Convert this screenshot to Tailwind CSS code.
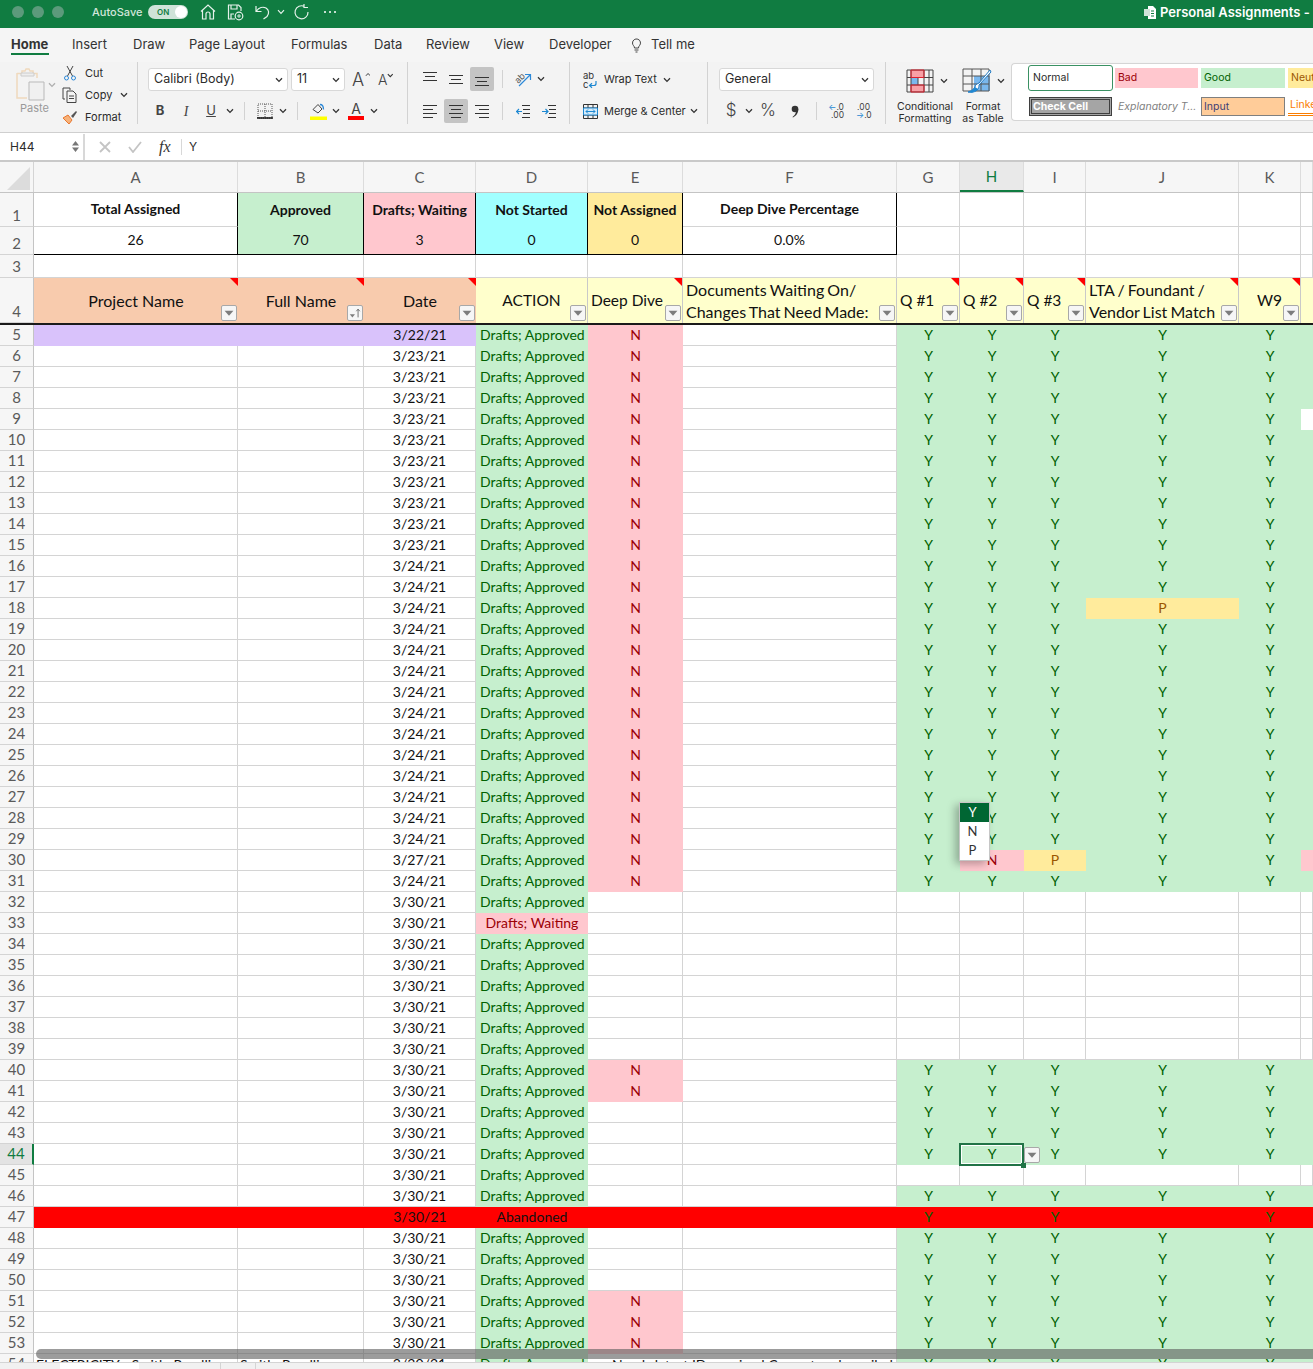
<!DOCTYPE html>
<html lang="en">
<head>
  <meta charset="UTF-8" />
  <title>Personal Assignments</title>
  <script src="https://cdn.jsdelivr.net/npm/@tailwindcss/browser@4"></script>
</head>
<body class="h-[1369px] w-[1313px] overflow-hidden bg-white font-['Inter',sans-serif] text-[#2b2b2b]">

  <svg class="hidden">
    <symbol id="chev" viewBox="0 0 8 6"><path d="M1 1.2 4 4.4 7 1.2" fill="none" stroke="#333" stroke-width="1.3"/></symbol>
    <symbol id="filter" viewBox="0 0 16 16"><path d="M3 5.5h10L8 11z" fill="#7d7d7d"/></symbol>
  </svg>

  <!-- title bar -->
  <div class="flex h-[28px] items-center bg-[#107c41] pb-[4px] text-white">
    <div class="ml-[12px] flex gap-[8px]">
      <span class="h-[12px] w-[12px] rounded-full bg-[#5c9a7b]"></span>
      <span class="h-[12px] w-[12px] rounded-full bg-[#5c9a7b]"></span>
      <span class="h-[12px] w-[12px] rounded-full bg-[#5c9a7b]"></span>
    </div>
    <span class="ml-[28px] w-[56px] text-[11px] font-medium text-[#d3e6db]">AutoSave</span>
    <div class="flex h-[14px] w-[40px] items-center justify-between rounded-full bg-[#cfe3d8] pl-[9px] pr-[1px]">
      <span class="text-[8px] font-semibold text-[#107c41]">ON</span>
      <span class="h-[12px] w-[12px] rounded-full bg-white"></span>
    </div>
    <svg class="ml-[11px]" width="18" height="18" viewBox="0 0 18 18" fill="none" stroke="#e6f2eb" stroke-width="1.2"><path d="M2 8.5 9 2l7 6.5M3.5 7.5V16h3.5v-5a2 2 0 0 1 4 0v5h3.500V7.500"/></svg>
    <svg class="ml-[9px]" width="18" height="18" viewBox="0 0 18 18" fill="none" stroke="#e6f2eb" stroke-width="1.2"><path d="M9 16H2.500V2h10l2.500 2.500V8M5 2v4h6V2M5 16v-5h3"/><circle cx="13" cy="13" r="3.800"/><path d="M11 13h4M13 11v4" stroke-width="0.9"/></svg>
    <svg class="ml-[10px]" width="17" height="18" viewBox="0 0 17 18" fill="none" stroke="#e6f2eb" stroke-width="1.2"><path d="M2 3v5.500h5.500M2.500 8C5 4.500 9 3.500 12 5c3 1.800 3.500 5.500 1 8.500L9.500 16"/></svg>
    <svg class="ml-[6px]" width="8" height="6" viewBox="0 0 8 6" fill="none" stroke="#e6f2eb" stroke-width="1.2"><path d="M1 1.200 4 4.400 7 1.200"/></svg>
    <svg class="ml-[8px]" width="17" height="18" viewBox="0 0 17 18" fill="none" stroke="#e6f2eb" stroke-width="1.2"><path d="M11.500 3.500A6.500 6.500 0 1 0 15 9M11 1v3.500h4"/></svg>
    <span class="ml-[14px] flex gap-[3px]"><i class="h-[2px] w-[2px] rounded-full bg-white"></i><i class="h-[2px] w-[2px] rounded-full bg-white"></i><i class="h-[2px] w-[2px] rounded-full bg-white"></i></span>
    <div class="ml-auto flex items-center gap-[3px] whitespace-nowrap pt-[1px]">
      <svg width="14" height="15" viewBox="0 0 14 15"><path d="M5 1h5l3 3v10H5z" fill="#fff"/><path d="M1 4h6v7H1z" fill="#cfe3d8"/><path d="M8 6h3M8 8.500h3M8 11h3" stroke="#107c41" stroke-width="1"/></svg>
      <span class="w-[153px] overflow-hidden text-[13px] font-semibold">Personal Assignments -</span>
    </div>
  </div>

  <!-- tabs -->
  <div class="flex h-[34px] items-center bg-[#f5f5f5] pl-[11px] text-[13px] text-[#333]">
    <span class="relative w-[61px] font-bold">Home<i class="absolute left-0 top-[18px] h-[2px] w-[38px] bg-[#107c41]"></i></span>
    <span class="w-[61px]">Insert</span>
    <span class="w-[56px]">Draw</span>
    <span class="w-[102px]">Page Layout</span>
    <span class="w-[83px]">Formulas</span>
    <span class="w-[52px]">Data</span>
    <span class="w-[68px]">Review</span>
    <span class="w-[55px]">View</span>
    <span class="w-[82px]">Developer</span>
    <svg class="-ml-[3px] mr-[3px] w-[20px]" width="12" height="16" viewBox="0 0 20 16" fill="none" stroke="#444" stroke-width="1"><path d="M4.500 6a4 4 0 1 1 7 2.600c-.8 1-1 1.400-1 2.400h-4c0-1-.3-1.500-1-2.400A4 4 0 0 1 4.500 6zM6.500 13h4M7.500 15h2"/></svg>
    <span>Tell me</span>
  </div>

  <!-- ribbon -->
  <div class="flex h-[71px] items-start border-b border-[#cfcfcf] bg-[#f3f3f3] text-[11px] text-[#2b2b2b]">

    <!-- clipboard -->
    <div class="flex w-[137px] shrink-0">
      <div class="ml-[15px] mt-[6px] flex w-[47px] shrink-0 flex-col">
        <div class="flex items-center">
          <svg width="32" height="33" viewBox="0 0 32 33" fill="none"><path d="M2 5.500h5V3h3l1-2h3l1 2h3v2.500h4V10" stroke="#f0d9bd" stroke-width="1.500"/><path d="M2 5v25h10" stroke="#f0d9bd" stroke-width="1.500"/><path d="M6 5h13v3H6z" fill="#eee" stroke="#ccc"/><path d="M14 14h15v18H14z" fill="#f0f0f0" stroke="#b9b9b9"/></svg>
          <svg class="ml-[1px]" width="8" height="6"><use href="#chev" opacity="0.35"/></svg>
        </div>
        <span class="ml-[5px] mt-[1px] text-[11px] leading-[12px] text-[#9a9a9a]">Paste</span>
      </div>
      <div class="flex flex-col">
        <div class="flex h-[22px] items-center gap-[7px]">
          <svg width="16" height="16" viewBox="0 0 16 16" fill="none" stroke="#444" stroke-width="1"><path d="M5 1l5.500 10M11 1 5.500 11"/><circle cx="4.500" cy="13" r="2" stroke="#2b88d8"/><circle cx="11.500" cy="13" r="2" stroke="#2b88d8"/></svg>
          <span>Cut</span>
        </div>
        <div class="flex h-[22px] items-center gap-[7px]">
          <svg width="16" height="16" viewBox="0 0 16 16" fill="none" stroke="#444" stroke-width="1"><path d="M3 12H1V1h7v2"/><path d="M5 4h6l3 3v8.500H5zM7 9h5M7 11.500h5"/></svg>
          <span>Copy</span>
          <svg class="ml-[1px]" width="8" height="6"><use href="#chev"/></svg>
        </div>
        <div class="flex h-[22px] items-center gap-[7px]">
          <svg width="16" height="16" viewBox="0 0 16 16" fill="none"><path d="M1 9l5-3 4 5-3 4z" fill="#f7b27a" stroke="#e8772e"/><path d="M9 7l5-5 1 1-4 6z" fill="#555"/></svg>
          <span>Format</span>
        </div>
      </div>
    </div>
    <span class="h-[62px] w-px bg-[#d2d2d2]"></span>

    <!-- font -->
    <div class="w-[269px] shrink-0 pl-[10px] pt-[6px]">
      <div class="flex h-[23px] items-center">
        <div class="flex h-[23px] w-[140px] items-center justify-between rounded-[3px] border border-[#d8d8d8] bg-white pl-[5px] pr-[4px] text-[12.500px]">Calibri (Body)<svg width="8" height="6"><use href="#chev"/></svg></div>
        <div class="ml-[3px] flex h-[23px] w-[54px] items-center justify-between rounded-[3px] border border-[#d8d8d8] bg-white pl-[5px] pr-[4px] text-[12.500px]">11<svg width="8" height="6"><use href="#chev"/></svg></div>
        <span class="ml-[7px] flex w-[18px] items-start text-[18px] font-light leading-none text-[#444]">A<svg class="mt-[1px]" width="7" height="5"><use href="#chev" transform="rotate(180 3.500 2.500)"/></svg></span>
        <span class="ml-[8px] flex w-[16px] items-start text-[14px] font-light leading-none text-[#444]">A<svg width="7" height="5"><use href="#chev"/></svg></span>
      </div>
      <div class="mt-[9px] flex h-[22px] items-center text-[#444]">
        <span class="w-[24px] text-center text-[13px] font-bold">B</span>
        <span class="w-[28px] text-center font-['Liberation_Serif',serif] text-[14px] italic">I</span>
        <span class="w-[22px] text-center text-[13px] underline">U</span>
        <span class="flex w-[16px] justify-center"><svg width="8" height="6"><use href="#chev"/></svg></span>
        <span class="ml-[6px] h-[18px] w-px bg-[#d2d2d2]"></span>
        <span class="ml-[5px] flex w-[29px] justify-center">
          <svg width="16" height="16" viewBox="0 0 16 16" fill="none"><path d="M1 1h14v14H1zM8 1v14M1 8h14" stroke="#555" stroke-dasharray="1 1"/><path d="M0 15h16" stroke="#111" stroke-width="1.500"/></svg>
        </span>
        <span class="flex w-[8px] justify-center"><svg width="8" height="6"><use href="#chev"/></svg></span>
        <span class="ml-[10px] h-[18px] w-px bg-[#d2d2d2]"></span>
        <span class="ml-[8px] flex w-[24px] justify-center">
          <svg width="17" height="18" viewBox="0 0 17 18" fill="none"><path d="M3 7.500 8 2.500l4 4.500-4 4z" stroke="#444"/><path d="M10 2.500c2 0 3.500 2 3.500 5" stroke="#2b88d8" stroke-width="1.300"/><path d="M0 14.500h17V18H0z" fill="#ffff00"/></svg>
        </span>
        <span class="flex w-[12px] justify-center"><svg width="8" height="6"><use href="#chev"/></svg></span>
        <span class="flex w-[28px] flex-col items-center"><span class="text-[14px] leading-[14px]">A</span><i class="h-[4px] w-[16px] bg-[#ff0000]"></i></span>
        <span class="flex w-[8px] justify-center"><svg width="8" height="6"><use href="#chev"/></svg></span>
      </div>
    </div>
    <span class="h-[62px] w-px bg-[#d2d2d2]"></span>

    <!-- alignment -->
    <div class="w-[161px] shrink-0 pl-[10px] pt-[5px]">
      <div class="flex h-[24px] items-center">
        <span class="flex h-[24px] w-[24px] justify-center pt-[5px]"><svg width="14" height="9" stroke="#333"><path d="M0 .5h14M2 4.500h10M0 8.500h14"/></svg></span>
        <span class="ml-[2px] flex h-[24px] w-[24px] items-center justify-center"><svg width="14" height="9" stroke="#333"><path d="M0 .5h14M2 4.500h10M0 8.500h14"/></svg></span>
        <span class="ml-[2px] flex h-[24px] w-[24px] items-end justify-center rounded-[2px] bg-[#c4c4c4] pb-[5px]"><svg width="14" height="9" stroke="#333"><path d="M0 .5h14M2 4.500h10M0 8.500h14"/></svg></span>
        <span class="ml-[8px] h-[18px] w-px bg-[#d2d2d2]"></span>
        <span class="ml-[7px] flex w-[26px] justify-center">
          <svg width="18" height="16" viewBox="0 0 18 16" fill="none"><text x="1" y="11" transform="rotate(-45 5 8)" font-size="9" fill="#555">ab</text><path d="M5 15 16 4M11 3.500h5.500V9" stroke="#2b88d8" stroke-width="1.200"/></svg>
        </span>
        <span class="flex w-[10px] justify-center"><svg width="8" height="6"><use href="#chev"/></svg></span>
      </div>
      <div class="mt-[8px] flex h-[24px] items-center">
        <span class="flex h-[24px] w-[24px] items-center justify-center"><svg width="14" height="14" stroke="#333"><path d="M0 1.500h14M0 5.500h10M0 9.500h14M0 13.500h10"/></svg></span>
        <span class="ml-[2px] flex h-[24px] w-[24px] items-center justify-center rounded-[2px] bg-[#c4c4c4]"><svg width="14" height="14" stroke="#333"><path d="M0 1.500h14M2 5.500h10M0 9.500h14M2 13.500h10"/></svg></span>
        <span class="ml-[2px] flex h-[24px] w-[24px] items-center justify-center"><svg width="14" height="14" stroke="#333"><path d="M0 1.500h14M4 5.500h10M0 9.500h14M4 13.500h10"/></svg></span>
        <span class="ml-[8px] h-[18px] w-px bg-[#d2d2d2]"></span>
        <span class="ml-[8px] flex w-[24px] justify-center"><svg width="14" height="14" fill="none"><path d="M6 1.500h8M7 5.500h7M7 9.500h7M6 13.500h8" stroke="#333"/><path d="M0 7.500h6M3 5 .5 7.500 3 10" stroke="#1e88d2" stroke-width="1.200"/></svg></span>
        <span class="ml-[2px] flex w-[24px] justify-center"><svg width="14" height="14" fill="none"><path d="M6 1.500h8M7 5.500h7M7 9.500h7M6 13.500h8" stroke="#333"/><path d="M0 7.500h6M3.500 5 6 7.500 3.500 10" stroke="#1e88d2" stroke-width="1.200"/></svg></span>
      </div>
    </div>
    <span class="h-[62px] w-px bg-[#d2d2d2]"></span>

    <!-- wrap and merge -->
    <div class="w-[137px] shrink-0 pl-[13px] pt-[6px] text-[11px]">
      <div class="flex h-[23px] items-center">
        <svg class="mr-[6px]" width="15" height="18" viewBox="0 0 15 18" fill="none"><text x="0" y="8" font-size="9.500" fill="#333">ab</text><text x="0" y="17" font-size="9.500" fill="#333">c</text><path d="M13 10v2.500a2 2 0 0 1-2 2H6.500M9 12.300l-2.500 2.200L9 16.800" stroke="#1e88d2" stroke-width="1.200"/></svg>
        <span>Wrap Text</span>
        <svg class="ml-[6px]" width="8" height="6"><use href="#chev"/></svg>
      </div>
      <div class="mt-[9px] flex h-[22px] items-center">
        <svg class="mr-[6px]" width="15" height="15" viewBox="0 0 15 15" fill="none"><path d="M.5.5h14v14H.5zM.5 4h14M.5 11h14M5 .5V4M10 .5V4M5 11v3.500M10 11v3.500" stroke="#333"/><path d="M.5 4h14v7H.5z" fill="#d6ecfa" stroke="#1e88d2"/><path d="M3 7.500h9M5 5.500l-2 2 2 2M10 5.500l2 2-2 2" stroke="#1e88d2"/></svg>
        <span class="whitespace-nowrap">Merge &amp; Center</span>
        <svg class="ml-[4px]" width="8" height="6"><use href="#chev"/></svg>
      </div>
    </div>
    <span class="h-[62px] w-px bg-[#d2d2d2]"></span>

    <!-- number -->
    <div class="w-[177px] shrink-0 pl-[11px] pt-[6px]">
      <div class="flex h-[23px] w-[155px] items-center justify-between rounded-[3px] border border-[#d8d8d8] bg-white pl-[5px] pr-[4px] text-[12.500px]">General<svg width="8" height="6"><use href="#chev"/></svg></div>
      <div class="mt-[9px] flex h-[22px] items-center text-[#444]">
        <span class="w-[24px] text-center text-[17px] font-light">$</span>
        <span class="flex w-[12px] justify-center"><svg width="8" height="6"><use href="#chev"/></svg></span>
        <span class="w-[26px] text-center text-[17px] font-light">%</span>
        <span class="ml-[2px] flex w-[24px] justify-center"><svg width="8" height="13" viewBox="0 0 8 13" fill="#333"><circle cx="4" cy="4" r="3.300"/><path d="M5 6c2-1 2.500-3 2.300-2C7.500 8 5 11 2 12.500L1.500 12C3.500 10.500 5 8.500 5 6z"/></svg></span>
        <span class="ml-[9px] h-[18px] w-px bg-[#d2d2d2]"></span>
        <span class="ml-[11px] w-[16px] text-right text-[8.500px] leading-[8px]"><span class="text-[#1e88d2]">←</span>.0<br />.00</span>
        <span class="ml-[12px] w-[14px] text-right text-[8.500px] leading-[8px]">.00<br /><span class="text-[#1e88d2]">→</span>.0</span>
      </div>
    </div>
    <span class="h-[62px] w-px bg-[#d2d2d2]"></span>

    <!-- styles buttons -->
    <div class="ml-[9px] flex w-[60px] shrink-0 flex-col items-center pt-[6px]">
      <div class="ml-[4px] flex h-[26px] items-center gap-[6px]">
        <svg width="28" height="24" viewBox="0 0 28 24" fill="none"><path d="M5 1h13v7H5zM5 16h13v7H5z" fill="#f8a0a6"/><path d="M5 8.500h7v7.500H5z" fill="#7ab8ee"/><path d="M1 1h26v22H1zM1 8.500h26M1 16h26M5 1v22M12 8v8M18 1v22M23 1v22" stroke="#444"/><path d="M5 1h13v7.500H5zM5 16h13v7H5z" stroke="#e01f2d"/></svg>
        <svg width="8" height="6"><use href="#chev"/></svg>
      </div>
      <span class="mt-[7px] text-center text-[10.500px] leading-[12px]">Conditional Formatting</span>
    </div>
    <div class="flex w-[56px] shrink-0 flex-col items-center pt-[6px]">
      <div class="ml-[1px] flex h-[26px] items-center gap-[5px]">
        <svg width="30" height="26" viewBox="0 0 30 26" fill="none"><path d="M12 8h16v15H12z" fill="#7ab8ee"/><path d="M1 1h26v22H1zM1 8h26M1 16h26M10 1v22M19 1v22" stroke="#555"/><path d="M28 2 17 15c-2 1-4 2-4 4-1 2-4 4-7 5 3 1 8 0 10-3 1-2 1-3 1-4L29 4z" fill="#fff" stroke="#1e78c2"/><path d="M13 19c-1 2-4 4-7 5 3 1 8 0 10-3z" fill="#1e88d2"/></svg>
        <svg width="8" height="6"><use href="#chev"/></svg>
      </div>
      <span class="mt-[7px] text-center text-[10.500px] leading-[12px]">Format<br />as Table</span>
    </div>

    <!-- cell styles gallery -->
    <div class="mt-px h-[58px] min-w-0 flex-1 overflow-hidden rounded-l-[4px] border border-r-0 border-[#d5d5d5] bg-white pl-[16px] pt-[1px] text-[10.500px]">
      <div class="flex h-[26px] w-[400px] items-center">
        <span class="flex h-[26px] w-[85px] shrink-0 items-center rounded-[3px] border border-[#3a9163] pl-[4px]">Normal</span>
        <span class="ml-[2px] flex h-[20px] w-[83px] shrink-0 items-center bg-[#ffc7ce] pl-[3px] text-[#9c0006]">Bad</span>
        <span class="ml-[3px] flex h-[20px] w-[84px] shrink-0 items-center bg-[#c6efce] pl-[3px] text-[#006100]">Good</span>
        <span class="ml-[3px] flex h-[20px] w-[84px] shrink-0 items-center bg-[#ffeb9c] pl-[3px] text-[#9c5700]">Neutral</span>
      </div>
      <div class="mt-[6px] flex h-[19px] w-[400px] items-center">
        <span class="ml-px flex h-[19px] w-[83px] shrink-0 items-center border-[3px] border-double border-[#3f3f3f] bg-[#a5a5a5] pl-[1px] font-bold text-white">Check Cell</span>
        <span class="ml-[6px] w-[80px] shrink-0 whitespace-nowrap italic text-[#7f7f7f]">Explanatory T...</span>
        <span class="ml-[3px] flex h-[19px] w-[84px] shrink-0 items-center border border-[#7f7f7f] bg-[#ffcc99] pl-[2px] text-[#3f3f76]">Input</span>
        <span class="ml-[3px] flex h-[19px] w-[84px] shrink-0 items-center border-b-[3px] border-double border-[#fa7d00] pl-[2px] text-[#fa7d00]">Linked Cell</span>
      </div>
    </div>
  </div>

  <!-- formula bar -->
  <div class="flex h-[29px] items-center border-b-2 border-[#c9c9c9] bg-white text-[12px]">
    <div class="flex h-[26px] w-[85px] items-center justify-between border-r-2 border-[#d8d8d8] pl-[10px] pr-[3px]">
      H44
      <svg width="9" height="13" fill="#777"><path d="M4.500 1 8 5.500H1zM4.500 12 1 7.500h7z"/></svg>
    </div>
    <svg class="ml-[14px]" width="12" height="12" fill="none" stroke="#c4c4c4" stroke-width="1.800"><path d="M1 1l10 10M11 1 1 11"/></svg>
    <svg class="ml-[17px]" width="14" height="12" fill="none" stroke="#c4c4c4" stroke-width="1.800"><path d="M1 6l4 5 8-10"/></svg>
    <span class="ml-[17px] w-[22px] font-['Liberation_Serif',serif] text-[16px] italic text-[#333]">fx</span>
    <span class="h-[16px] w-px bg-[#d8d8d8]"></span>
    <span class="ml-[7px] text-[12px]">Y</span>
  </div>

  <!-- sheet -->
  <div id="sheet" class="relative h-[1200px] overflow-hidden font-['Lato',sans-serif] text-[14px] text-[#111]">
    <div id="rows"></div>

    <!-- dropdown list of the selected cell -->
    <div class="absolute left-[959px] top-[640px] z-20 flex w-[31px] flex-col border border-[#c6c6c6] bg-white pr-[4px] text-[13px] text-[#333] shadow-[-4px_3px_8px_rgba(0,0,0,0.28)]">
      <span class="-mr-[4px] flex h-[19px] items-center justify-center bg-[#006633] pr-[4px] text-white">Y</span>
      <span class="flex h-[19px] items-center justify-center">N</span>
      <span class="flex h-[19px] items-center justify-center">P</span>
    </div>

    <!-- selected cell H44 -->
    <div class="absolute left-[959px] top-[981px] z-10 h-[23px] w-[65px] border-2 border-[#217346] outline outline-1 -outline-offset-3 outline-white"></div>
    <div class="absolute left-[1021px] top-[1001px] z-10 h-[5px] w-[5px] bg-[#217346]"></div>
    <div class="absolute left-[1024px] top-[985px] z-10 h-[16px] w-[16px] rounded-[2px] border border-[#a8a8a8] bg-[#f6f6f6]"><svg class="h-full w-full"><use href="#filter"/></svg></div>

    <!-- horizontal scroller -->
    <div class="absolute bottom-[3px] left-[36px] right-0 z-20 h-[10px] rounded-l-full bg-[#5a5a5a]/60"></div>
  </div>

  <!-- sheet tabs -->
  <div class="flex h-[7px] border-t border-[#d4d4d4] bg-[#f1f1f1]">
    <span class="ml-[60px] w-[79px] bg-white"></span>
    <span class="ml-[81px] w-[36px] border-x border-[#d4d4d4]"></span>
  </div>

  <script>
    const colGrid = "grid grid-cols-[34px_204px_126px_112px_112px_95px_214px_63px_64px_62px_153px_62px_12px]";
    const line = "border-r border-b border-[#d4d4d4]";
    const center = "flex items-center justify-center overflow-hidden whitespace-nowrap";
    const bodyCenter = "flex items-center justify-center overflow-hidden whitespace-nowrap pb-[2px]";
    const dateCenter = "flex items-center justify-center overflow-hidden whitespace-nowrap";
    const colLetters = ["A", "B", "C", "D", "E", "F", "G", "H", "I", "J", "K", ""];

    const filterBtn = `<span class="absolute bottom-[2px] right-[1px] h-[16px] w-[16px] rounded-[2px] border border-[#a8a8a8] bg-[#f6f6f6]"><svg class="h-full w-full"><use href="#filter"/></svg></span>`;
    const sortBtn = `<span class="absolute bottom-[2px] right-[1px] h-[16px] w-[16px] rounded-[2px] border border-[#a8a8a8] bg-[#f6f6f6]"><svg class="h-full w-full" viewBox="0 0 16 16"><path d="M2 9.500h6L5 13z" fill="#7d7d7d"/><path d="M11.500 13V4M9.500 6l2-2.500 2 2.500" fill="none" stroke="#666"/></svg></span>`;
    const redTip = `<span class="absolute right-0 top-0 h-0 w-0 border-l-[8px] border-t-[8px] border-l-transparent border-t-[#ff0000]"></span>`;

    function rowHead(n, pos, active) {
      const tone = active ? "bg-[#e3e3e3] text-[#107c41] border-r-2 border-r-[#107c41]" : "bg-[#f6f6f6] text-[#5a5a5a] border-r border-r-[#c4c4c4]";
      return `<div class="flex justify-center border-b border-[#d4d4d4] text-[15px] leading-[16px] ${pos} ${tone}">${n}</div>`;
    }

    // column letters
    let html = `<div class="${colGrid} h-[31px] border-b border-[#c4c4c4] bg-[#f6f6f6] text-[#5a5a5a] text-[15px]">
      <div class="border-r border-[#d4d4d4]"><svg width="33" height="30"><path d="M7 28 30 5v23z" fill="#dcdcdc"/></svg></div>`;
    colLetters.forEach(c => {
      const tone = c === "H" ? "bg-[#e9e9e9] text-[#107c41] border-b-2 border-b-[#107c41]" : "";
      html += `<div class="flex items-center justify-center border-r border-[#dcdcdc] ${tone}">${c}</div>`;
    });
    html += `</div>`;

    // summary rows 1 and 2
    const summary = [
      ["Total Assigned", "26", "bg-white"],
      ["Approved", "70", "bg-[#c6efce]"],
      ["Drafts; Waiting", "3", "bg-[#ffc7ce]"],
      ["Not Started", "0", "bg-[#a0ffff]"],
      ["Not Assigned", "0", "bg-[#ffeb9c]"],
      ["Deep Dive Percentage", "0.0%", "bg-white"]
    ];
    html += `<div class="${colGrid} h-[34px]">${rowHead(1, "items-end pb-[3px]")}`;
    summary.forEach((s, i) => {
      const inner = i === 0 || i === 5 ? "border-b border-b-[#d4d4d4]" : "";
      html += `<div class="${center} border-r border-r-black pb-[2px] font-bold ${s[2]} ${inner}">${s[0]}</div>`;
    });
    for (let i = 0; i < 6; i++) html += `<div class="${line}"></div>`;
    html += `</div>`;

    html += `<div class="${colGrid} h-[28px]">${rowHead(2, "items-end pb-[3px]")}`;
    summary.forEach(s => {
      html += `<div class="${center} border-r border-b border-black pb-[2px] ${s[2]}">${s[1]}</div>`;
    });
    for (let i = 0; i < 6; i++) html += `<div class="${line}"></div>`;
    html += `</div>`;

    // empty row 3
    html += `<div class="${colGrid} h-[23px] grid-rows-[23px]">${rowHead(3, "items-center")}`;
    for (let i = 0; i < 12; i++) html += `<div class="${line}"></div>`;
    html += `</div>`;

    // table header row 4
    const orange = "bg-[#f8cbad] text-[16px]";
    const yellow = "bg-[#ffffcc] border-r border-[#c9c9c9] pt-[1px] text-[15.500px]";
    const yellowWide = "bg-[#ffffcc] border-r border-[#c9c9c9] text-[16px] [word-spacing:-1px]";
    const heads = [
      ["Project Name", orange, "justify-center", filterBtn, redTip],
      ["Full Name", orange, "justify-center", sortBtn, redTip],
      ["Date", orange, "justify-center", filterBtn, redTip],
      ["ACTION", yellow, "justify-center", filterBtn, ""],
      ["Deep Dive", yellow, "pl-[3px]", filterBtn, redTip],
      ["Documents Waiting On/<br>Changes That Need Made:", yellowWide, "pl-[3px] leading-[22px]", filterBtn, ""],
      ["Q #1", yellow, "pl-[3px]", filterBtn, redTip],
      ["Q #2", yellow, "pl-[3px]", filterBtn, redTip],
      ["Q #3", yellow, "pl-[3px]", filterBtn, redTip],
      ["LTA / Foundant /<br>Vendor List Match", yellowWide, "pl-[3px] leading-[22px]", filterBtn, redTip],
      ["W9", yellow, "justify-center", filterBtn, redTip]
    ];
    html += `<div class="${colGrid} h-[47px] grid-rows-[45px] border-b-2 border-[#1a1a1a]">${rowHead(4, "items-end pb-[3px]")}`;
    heads.forEach(h => {
      html += `<div class="relative flex items-center whitespace-nowrap ${h[1]} ${h[2]}"><span>${h[0]}</span>${h[4]}${h[3]}</div>`;
    });
    html += `<div class="bg-[#ffffcc]"></div></div>`;

    // body rows
    const dateFor = n => n === 5 ? "3/22/21" : n <= 15 ? "3/23/21" : n === 30 ? "3/27/21" : n <= 31 ? "3/24/21" : "3/30/21";
    const isNo = n => n <= 31 || n === 40 || n === 41 || n >= 51;
    const isGreen = n => n <= 31 || (n >= 40 && n <= 44) || n === 46 || n >= 48;

    const cellG = "text-[#006100] bg-[#c6efce]";
    const cellR = "text-[#9c0006] bg-[#ffc7ce]";
    const cellP = "text-[#9c5700] bg-[#ffeb9c]";

    function flagCell(n, col) {
      if (n === 47) {
        const mark = ["G", "I", "K"].includes(col) ? "Y" : "";
        return `<div class="${bodyCenter} text-[#006100]">${mark}</div>`;
      }
      if (!isGreen(n)) return `<div class="${line}"></div>`;
      if (n === 18 && col === "J") return `<div class="${bodyCenter} ${cellP}">P</div>`;
      if (n === 30 && col === "H") return `<div class="${bodyCenter} ${cellR}">N</div>`;
      if (n === 30 && col === "I") return `<div class="${bodyCenter} ${cellP}">P</div>`;
      return `<div class="${bodyCenter} ${cellG}">Y</div>`;
    }

    for (let n = 5; n <= 54; n++) {
      const red = n === 47;
      const purple = n === 5;
      const plain = purple ? "bg-[#d9c2fb]" : red ? "" : line;
      const rowTone = red ? "bg-[#ff0000]" : "";
      html += `<div class="${colGrid} h-[21px] grid-rows-[21px] leading-[16px] ${rowTone}">${rowHead(n, "items-center pb-[2px]", n === 44)}`;
      if (n === 54) {
        html += `<div class="${line} overflow-hidden whitespace-nowrap pl-[2px] pt-[3px]">ELECTRICITY - Smith, Reedline</div>`;
        html += `<div class="${line} overflow-hidden whitespace-nowrap pl-[2px] pt-[3px]">Smith, Reedline</div>`;
      } else {
        html += `<div class="${plain}"></div><div class="${plain}"></div>`;
      }
      html += `<div class="${purple || red ? bodyCenter : dateCenter} ${plain}">${dateFor(n)}</div>`;

      if (red) html += `<div class="${bodyCenter}">Abandoned</div>`;
      else if (n === 33) html += `<div class="${bodyCenter} ${cellR}">Drafts; Waiting</div>`;
      else html += `<div class="flex items-center overflow-hidden whitespace-nowrap pb-[2px] pl-[4px] ${cellG}">Drafts; Approved</div>`;

      if (n === 54) {
        html += `<div class="col-span-2 ${line} overflow-hidden whitespace-nowrap pl-[24px] pt-[3px]">Needs latest ID, received Current and emailed and</div>`;
      } else {
        if (red) html += `<div></div>`;
        else if (isNo(n)) html += `<div class="${bodyCenter} ${cellR}">N</div>`;
        else html += `<div class="${line}"></div>`;
        html += `<div class="${red ? "" : line}"></div>`;
      }

      ["G", "H", "I", "J", "K"].forEach(col => {
        html += flagCell(n, col);
      });

      if (n === 9) html += `<div></div>`;
      else if (n === 30) html += `<div class="${cellR}"></div>`;
      else if (red) html += `<div></div>`;
      else if (isGreen(n)) html += `<div class="${cellG}"></div>`;
      else html += `<div class="${line}"></div>`;
      html += `</div>`;
    }

    document.getElementById("rows").innerHTML = html;
  </script>
</body>
</html>
